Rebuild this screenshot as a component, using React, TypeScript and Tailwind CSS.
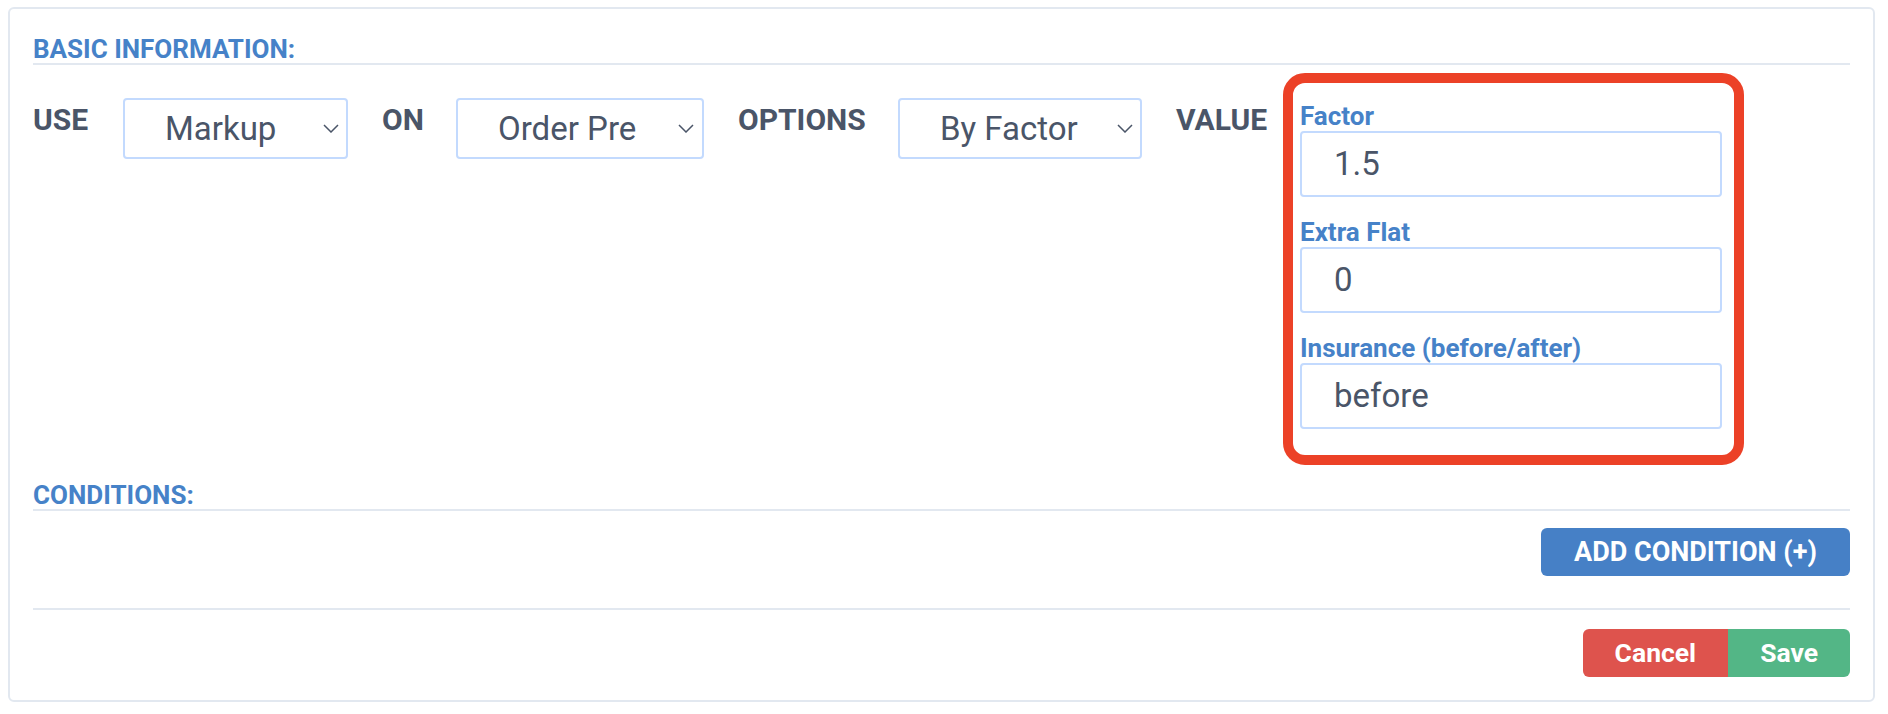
import React from "react";

const Chevron = () => (
  <svg width="16" height="9" viewBox="0 0 16 9" fill="none" className="shrink-0">
    <polyline points="1,1 8,8 15,1" stroke="#4a5568" strokeWidth="1.5" fill="none" />
  </svg>
);

const Label = ({ text, w }: { text: string; w: string }) => (
  <div
    className={`${w} ml-[34px] mt-[29px] text-[30px] leading-[35px] font-bold text-[#4a5568] whitespace-nowrap`}
  >
    {text}
  </div>
);

const SelectBox = ({ text, w, pr }: { text: string; w: string; pr: string }) => (
  <div
    className={`${w} ${pr} ml-[34px] mt-[25px] h-[61px] border-2 border-[#c3dafe] rounded-[4px] pl-[40px] flex items-center text-[33px] text-[#4a5568] bg-white`}
  >
    <span className="whitespace-nowrap">{text}</span>
    <span className="ml-auto flex items-center">
      <Chevron />
    </span>
  </div>
);

const Field = ({ label, value, first }: { label: string; value: string; first?: boolean }) => (
  <div className={first ? "" : "mt-[20px]"}>
    <div className="text-[26px] leading-[30px] font-bold text-[#4682c8] whitespace-nowrap">{label}</div>
    <div className="w-[422px] h-[66px] border-2 border-[#c3dafe] rounded-[4px] pl-[32px] flex items-center text-[33px] text-[#4a5568]">
      {value}
    </div>
  </div>
);

export default function App() {
  return (
    <div className="w-[1888px] h-[714px] bg-white pt-[7px] font-['Roboto',sans-serif]">
      <div className="ml-[8px] w-[1867px] border-2 border-[#e2e8f0] rounded-[6px] px-[23px] pt-[26px] pb-[23px]">
        <div className="text-[26px] leading-[28px] font-bold text-[#4682c8] border-b-2 border-[#e2e8f0] whitespace-nowrap">
          BASIC INFORMATION:
        </div>

        <div className="mt-[8px] flex items-start">
          <div className="w-[56px] mt-[29px] text-[30px] leading-[35px] font-bold text-[#4a5568] whitespace-nowrap">
            USE
          </div>
          <SelectBox text="Markup" w="w-[225px]" pr="pr-[7px]" />
          <Label text="ON" w="w-[40px]" />
          <SelectBox text="Order Pre" w="w-[248px]" pr="pr-[8px]" />
          <Label text="OPTIONS" w="w-[126px]" />
          <SelectBox text="By Factor" w="w-[244px]" pr="pr-[7px]" />
          <Label text="VALUE" w="w-[91px]" />
          <div className="ml-[16px] border-[10px] border-[#ec4127] rounded-[22px] pl-[7px] pr-[12px] pt-[18px] pb-[26px]">
            <Field label="Factor" value="1.5" first />
            <Field label="Extra Flat" value="0" />
            <Field label="Insurance (before/after)" value="before" />
          </div>
        </div>

        <div className="mt-[16px] text-[26px] leading-[28px] font-bold text-[#4682c8] border-b-2 border-[#e2e8f0] whitespace-nowrap">
          CONDITIONS:
        </div>

        <div className="mt-[17px] flex justify-end">
          <button className="h-[48px] px-[33px] bg-[#4680c6] text-white font-bold text-[27px] rounded-[6px] whitespace-nowrap">
            ADD CONDITION (+)
          </button>
        </div>

        <div className="mt-[32px] border-t-2 border-[#e2e8f0]" />

        <div className="mt-[19px] flex justify-end">
          <button className="h-[48px] px-[32px] bg-[#de534d] text-white font-bold text-[26.5px] rounded-l-[6px]">
            Cancel
          </button>
          <button className="h-[48px] px-[32px] bg-[#53b686] text-white font-bold text-[26.5px] rounded-r-[6px]">
            Save
          </button>
        </div>
      </div>
    </div>
  );
}
